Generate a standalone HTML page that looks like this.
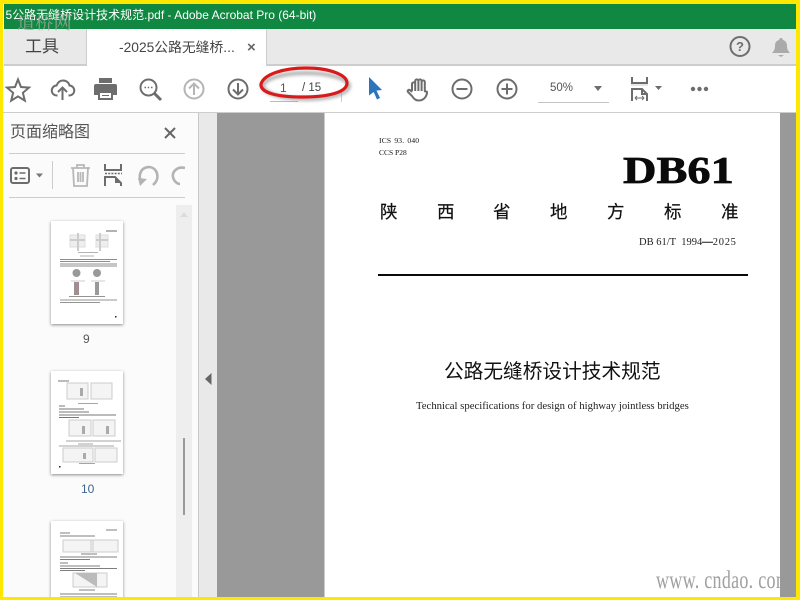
<!DOCTYPE html>
<html><head><meta charset="utf-8"><style>
html,body{margin:0;padding:0;width:800px;height:600px;overflow:hidden;background:#fff}
*{box-sizing:border-box}
.a{position:absolute;white-space:nowrap}
body{font-family:"Liberation Sans","Noto Sans CJK SC",sans-serif;color:#333}
.s{font-family:"Liberation Serif","Noto Serif CJK SC",serif;color:#111}
svg{position:absolute;overflow:visible}
.ic{fill:none;stroke:#6d6d6d;stroke-width:2}
.th{background:#fff;box-shadow:0 1px 3px rgba(0,0,0,.45);position:absolute;left:51px;width:72px}
.th svg{filter:blur(.35px)}
</style></head><body>
<div class="a" style="left:4px;top:4px;width:792px;height:25px;background:#118841"></div>
<div class="a" style="left:4px;top:5px;width:400px;height:22px;overflow:hidden"><div class="a" style="left:1.500px;top:1px;color:#fff;font-size:12px;line-height:18px">5公路无缝桥设计技术规范.pdf - Adobe Acrobat Pro (64-bit)</div></div>

<div class="a" style="left:4px;top:29px;width:792px;height:37px;background:#e9e9e9;border-bottom:2px solid #cdcdcd"></div>
<div class="a" style="left:86px;top:29px;width:181px;height:37px;background:#fff;border-left:1px solid #cdcdcd;border-right:1px solid #cdcdcd"></div>
<div class="a" style="left:25px;top:37px;font-size:17px;line-height:20px;color:#444">工具</div>
<div class="a" style="left:119px;top:39px;font-size:13.800px;line-height:18px;color:#444">-2025公路无缝桥...</div>
<div class="a" style="left:247px;top:40px;font-size:15px;line-height:15px;color:#666;font-weight:bold">×</div>

<svg style="left:730px;top:36px" width="22" height="22"><circle class="ic" cx="10" cy="10.500" r="9.500" stroke-width="1.800"/><text x="10" y="15" font-size="13" font-weight="bold" fill="#6d6d6d" text-anchor="middle" font-family="Liberation Sans">?</text></svg>
<svg style="left:772px;top:37px" width="20" height="21"><path d="M8 1h2l1 2c3 1 4 3 4 6 0 3 1 5 3 7H0c2-2 3-4 3-7 0-3 1-5 4-6zM6 18h6l-3 2z" fill="#aaa"/></svg>

<!-- toolbar -->
<svg style="left:6px;top:78px" width="24" height="24"><path class="ic" d="M12 1.500l3 7.500 8 .6-6.100 5.200 1.900 7.800L12 18.400 5.200 22.600l1.900-7.800L1 9.600 9 9z"/></svg>
<svg style="left:51px;top:78px" width="24" height="24"><path class="ic" d="M6.500 17.500H6a5 5 0 0 1-.5-10C7 4 9.500 2.500 12 2.500c3.500 0 6 2.300 6.500 5a5 5 0 0 1-.5 10h-.5M11.500 22V10M7 14l4.500-4.500L16 14"/></svg>
<svg style="left:94px;top:78px" width="23" height="22"><path d="M5 0h13v5H5zM2 6h19a2 2 0 0 1 2 2v9h-4v-4H4v4H0V8a2 2 0 0 1 2-2z" fill="#6d6d6d"/><path d="M4 13h15v9H4z" fill="#6d6d6d"/><path d="M6 15h11v5H6z" fill="#fff"/><path d="M8 17h7v1H8z" fill="#6d6d6d"/></svg>
<svg style="left:139px;top:78px" width="24" height="24"><circle class="ic" cx="9.500" cy="9.500" r="8" stroke-width="2"/><path d="M15 15l7 7" stroke="#6d6d6d" stroke-width="3" fill="none"/><path d="M5.500 9.500h1.500M8.700 9.500h1.500M12 9.500h1.500" stroke="#6d6d6d" stroke-width="1.600"/></svg>
<svg style="left:183px;top:78px" width="22" height="22"><circle cx="11" cy="11" r="9.500" fill="none" stroke="#b5b5b5" stroke-width="2"/><path d="M11 17V5.500M6 10.500l5-5 5 5" fill="none" stroke="#b5b5b5" stroke-width="2"/></svg>
<svg style="left:227px;top:78px" width="22" height="22"><circle class="ic" cx="11" cy="11" r="9.500"/><path class="ic" d="M11 5v11.500M6 11.500l5 5 5-5"/></svg>

<div class="a" style="left:270px;top:101px;width:28px;height:1px;background:#bbb"></div>
<div class="a" style="left:341px;top:90px;width:1px;height:12px;background:#ccc"></div>
<svg style="left:258px;top:66px" width="92" height="36"><defs><filter id="b" x="-20%" y="-40%" width="140%" height="180%"><feGaussianBlur stdDeviation="1.800"/></filter></defs><ellipse cx="48" cy="20" rx="43" ry="13" fill="none" stroke="#999" stroke-width="3" filter="url(#b)"/><path d="M3 18C6 8 26 2 48 2 72 2 89 9 89 17 89 27 68 31 44 31 20 31 2 27 3 18Z" fill="none" stroke="#d81a1a" stroke-width="3.200"/></svg>
<div class="a" style="left:280px;top:81px;font-size:12px;line-height:15px;color:#555">1</div>
<div class="a" style="left:302px;top:81px;font-size:11.500px;line-height:15px;color:#444">/ 15</div>

<svg style="left:368px;top:77px" width="16" height="23"><path d="M1 0l13 13-5.500.6L12 21l-3 1.500-3.300-7.500L1 18.500z" fill="#2c75bd"/></svg>
<svg style="left:407px;top:77px" width="22" height="25"><path class="ic" d="M5 14V7a1.600 1.600 0 0 1 3.200 0V4a1.600 1.600 0 0 1 3.200 0a1.600 1.600 0 0 1 3.200 0v1a1.600 1.600 0 0 1 3.200 0v9c0 1 2.200 0 2.200 1 0 4-3 8.500-8 8.500-3.500 0-5-1.500-7-4.500L1 15c-1-1.500 1-3 2.500-1.500L5 15M8.200 7v7M11.400 4v10M14.600 4v10" stroke-width="1.500"/></svg>
<svg style="left:451px;top:78px" width="22" height="22"><circle class="ic" cx="11" cy="11" r="9.500"/><path class="ic" d="M5.500 11h11"/></svg>
<svg style="left:496px;top:78px" width="22" height="22"><circle class="ic" cx="11" cy="11" r="9.500"/><path class="ic" d="M5.500 11h11M11 5.500v11"/></svg>
<div class="a" style="left:550px;top:81px;font-size:11.500px;line-height:15px;color:#555">50%</div>
<div class="a" style="left:538px;top:102px;width:71px;height:1px;background:#c4c4c4"></div>
<svg style="left:594px;top:86px" width="10" height="6"><path d="M0 0h8l-4 5z" fill="#6d6d6d"/></svg>
<svg style="left:631px;top:76px" width="30" height="26"><path d="M1 1v6h15V1" fill="none" stroke="#6d6d6d" stroke-width="2"/><path d="M0 9h17" stroke="#ccc" stroke-width="1"/><path d="M1 25V13h10l5 5v7M11 13v5h5" fill="none" stroke="#6d6d6d" stroke-width="2"/><path d="M4 22h9M4 22l2-2M4 22l2 2M13 22l-2-2M13 22l-2 2" stroke="#6d6d6d" stroke-width="1" fill="none"/><path d="M24 10h7l-3.500 4z" fill="#6d6d6d"/></svg>
<svg style="left:690px;top:85px" width="20" height="8"><circle cx="3" cy="4" r="2.200" fill="#6d6d6d"/><circle cx="9.500" cy="4" r="2.200" fill="#6d6d6d"/><circle cx="16" cy="4" r="2.200" fill="#6d6d6d"/></svg>

<div class="a" style="left:0;top:112px;width:800px;height:1px;background:#cdcdcd"></div>

<!-- sidebar -->
<div class="a" style="left:3px;top:113px;width:195px;height:487px;background:#fbfbfb"></div>
<div class="a" style="left:10px;top:122px;font-size:16px;line-height:22px;color:#555">页面缩略图</div>
<svg style="left:164px;top:127px" width="12" height="12"><path d="M1 1l10 10M11 1L1 11" stroke="#666" stroke-width="2"/></svg>
<div class="a" style="left:9px;top:153px;width:176px;height:1px;background:#ccc"></div>
<div class="a" style="left:9px;top:197px;width:176px;height:1px;background:#ccc"></div>
<svg style="left:10px;top:167px" width="36" height="18"><rect x="1" y="1" width="18" height="15" rx="2" fill="none" stroke="#6d6d6d" stroke-width="2"/><circle cx="6" cy="6" r="1.600" fill="#6d6d6d"/><circle cx="6" cy="11.500" r="1.600" fill="#6d6d6d"/><path d="M9.500 6h6M9.500 11.500h6" stroke="#6d6d6d" stroke-width="1.600"/><path d="M26 6.500h7l-3.500 4z" fill="#777"/></svg>
<div class="a" style="left:52px;top:161px;width:1px;height:28px;background:#ccc"></div>
<svg style="left:70px;top:164px" width="21" height="23"><path d="M1 4h19M7 4V1h7v3M3 4l1 18h13l1-18M8 8v10M10.500 8v10M13 8v10" fill="none" stroke="#b8b8b8" stroke-width="1.800"/></svg>
<svg style="left:104px;top:164px" width="20" height="23"><path d="M1 0v6h16V0" fill="none" stroke="#6d6d6d" stroke-width="2"/><path d="M1 9.500h17" stroke="#6d6d6d" stroke-width="1.500" stroke-dasharray="2 1.200"/><path d="M1 22V13h10l6 6v3" fill="none" stroke="#6d6d6d" stroke-width="2"/><path d="M11 13v6h6z" fill="#6d6d6d"/></svg>
<svg style="left:137px;top:165px" width="23" height="22"><path d="M5 18C1 13 2 3 11.500 2 20 2 23 12 18 18l-2 2" fill="none" stroke="#b3b3b3" stroke-width="2.600"/><path d="M1 13l9 1-7 7z" fill="#b3b3b3"/></svg>
<div class="a" style="left:171px;top:165px;width:14px;height:22px;overflow:hidden"><svg style="left:0;top:0" width="23" height="22"><path d="M14 3C6 1 1 7 2 12c1 5 5 7 7 7" fill="none" stroke="#b3b3b3" stroke-width="2.600"/></svg></div>

<div class="a" style="left:176px;top:205px;width:16px;height:395px;background:#eee"></div>
<svg style="left:179px;top:211px" width="10" height="6"><path d="M1 6L5 1l4 5z" fill="#dcdcdc"/></svg>
<div class="a" style="left:183px;top:438px;width:2px;height:77px;background:#9a9a9a"></div>

<!-- thumbnails -->
<div class="th" style="top:221px;height:103px"><svg style="left:0;top:0" width="72" height="103">
<g stroke="#ddd" fill="#eee" stroke-width="1"><path d="M19 14h15v12H19zM45 14h12v12H45z"/><path d="M27 12v18M49 12v18M19 19h15M45 19h12" stroke="#ccc" stroke-width="2"/></g>
<g stroke="#666"><path d="M27 31.500h20M29 35h14" stroke-width=".9" opacity=".5"/><path d="M9 38.500h57M9 40.500h50M9 43h57M9 45h57" stroke-width="1" opacity=".75"/></g>
<circle cx="25.500" cy="52" r="4" fill="#999"/><circle cx="46" cy="52" r="4" fill="#999"/><rect x="23" y="61" width="5" height="13" fill="#a08f90"/><rect x="44" y="61" width="4" height="13" fill="#999"/>
<path d="M20 60h14M40 60h14" stroke="#ccc"/><path d="M18 75.500h36M9 79h57M9 81.500h40" stroke="#666" opacity=".7"/><rect x="64" y="95" width="1.500" height="1.500" fill="#222"/><path d="M55 10h11" stroke="#666"/>
</svg></div>
<div class="a" style="left:83px;top:332px;font-size:12px;line-height:15px;color:#555">9</div>

<div class="th" style="top:371px;height:103px"><svg style="left:0;top:0" width="72" height="103">
<path d="M7 10h11M8 35h6M8 38h25M8 41h30M8 44h57M8 46.500h20" stroke="#555" opacity=".8"/>
<g stroke="#ccc" fill="#f4f4f4"><path d="M16 12h21v16H16zM40 12h21v16H40zM18 49h22v16H18zM42 49h22v16H42zM12 77h30v14H12zM44 77h22v14H44z"/></g>
<path d="M29 17h3v8h-3zM60 24h-9M31 55h3v8h-3zM55 55h3v8h-3zM32 82h3v6h-3z" fill="#aaa" stroke="none"/>
<path d="M27 32.500h20M15 70h55M27 73h15M8 75h55M28 92.500h16" stroke="#555" opacity=".7" stroke-width=".8"/><rect x="8" y="95" width="1.500" height="1.500" fill="#222"/>
</svg></div>
<div class="a" style="left:81px;top:482px;font-size:12px;line-height:15px;color:#40658f">10</div>

<div class="th" style="top:521px;height:79px"><svg style="left:0;top:0" width="72" height="79">
<path d="M55 9h11M9 12h10M9 15h35M9 36h57M9 38.500h30M9 42h8M9 45h40M9 47.500h57M9 49.500h25M30 33h16M28 69h16M9 73h57M9 76h57" stroke="#555" opacity=".75" stroke-width=".9"/>
<path d="M12 19h30v12H12zM40 19h27v12H40zM22 52h34v14H22z" stroke="#ccc" fill="#f4f4f4"/><path d="M24 52h22v14z" fill="#bbb"/>
</svg></div>

<div class="a" style="left:198px;top:113px;width:1px;height:487px;background:#c8c8c8"></div>
<div class="a" style="left:199px;top:113px;width:18px;height:487px;background:#e9e9e9"></div>
<svg style="left:205px;top:373px" width="7" height="12"><path d="M6.500 0v12L0 6z" fill="#666"/></svg>

<!-- document -->
<div class="a" style="left:217px;top:113px;width:580px;height:487px;background:#999"></div>
<div class="a" style="left:324px;top:113px;width:456px;height:487px;background:#fff;border-left:1px solid #ccc"></div>

<div class="a s" style="left:379px;top:136px;font-size:7.500px;line-height:10px;word-spacing:1px;letter-spacing:.2px">ICS 93. 040</div>
<div class="a s" style="left:379px;top:148px;font-size:7.500px;line-height:10px">CCS P28</div>
<div class="a s" style="left:623px;top:149px;font-size:38px;line-height:44px;font-weight:bold;color:#0a0a0a;-webkit-text-stroke:.7px #0a0a0a;transform-origin:0 50%;transform:scaleX(1.220)">DB61</div>
<div class="a" style="left:380px;top:202px;font-size:17.500px;line-height:20px;color:#111;-webkit-text-stroke:.2px #111"><span class="a" style="left:0">陕</span><span class="a" style="left:57px">西</span><span class="a" style="left:113px">省</span><span class="a" style="left:170px">地</span><span class="a" style="left:227px">方</span><span class="a" style="left:284px">标</span><span class="a" style="left:341px">准</span></div>
<div class="a s" style="left:639px;top:236px;font-size:10.500px;line-height:13px;color:#222">DB 61/T&nbsp; 1994<span style="letter-spacing:-1px;-webkit-text-stroke:.5px #222">—</span><span style="margin-left:1px;letter-spacing:.7px">2025</span></div>
<div class="a" style="left:378px;top:274px;width:370px;height:2px;background:#0a0a0a"></div>
<div class="a" style="left:444px;top:361px;font-size:19.700px;line-height:22px;color:#111">公路无缝桥设计技术规范</div>
<div class="a s" style="left:416px;top:400px;font-size:10.730px;line-height:13px;color:#222">Technical specifications for design of highway jointless bridges</div>

<div class="a s" style="left:656px;top:568px;width:124px;height:26px;overflow:hidden;font-size:25px;line-height:26px;color:#a0a0a0;letter-spacing:.4px"><span style="display:inline-block;transform:scaleX(.72);transform-origin:0 50%">www. cndao. com</span></div>

<!-- watermark -->
<div class="a" style="left:17px;top:10px;font-size:18px;line-height:24px;letter-spacing:.3px;color:#a9a9a9;font-family:'Noto Serif CJK SC',serif;opacity:.8">道桥网</div>

<!-- yellow frame -->
<div class="a" style="left:0;top:0;width:800px;height:4px;background:#ffe800"></div>
<div class="a" style="left:0;top:0;width:3px;height:600px;background:#ffe800"></div>
<div class="a" style="left:796px;top:0;width:4px;height:600px;background:#ffe800"></div>
<div class="a" style="left:0;top:597px;width:800px;height:3px;background:#ffe800"></div>
</body></html>
